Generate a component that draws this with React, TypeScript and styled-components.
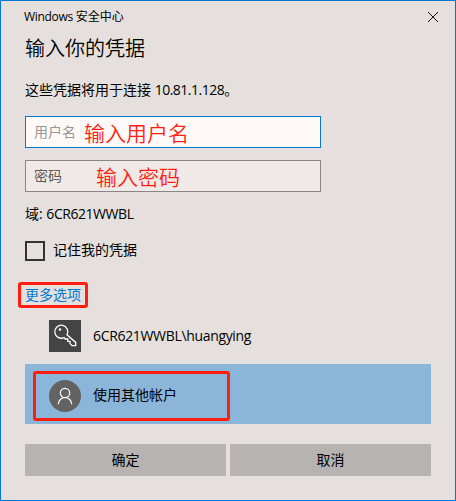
import React from "react";
import styled, { createGlobalStyle } from "styled-components";

const GlobalStyle = createGlobalStyle`
  * { box-sizing: border-box; }
  body { margin: 0; }
`;

const Dialog = styled.main`
  display: flex;
  flex-direction: column;
  width: 456px;
  height: 501px;
  padding: 0 24px;
  border: 1px solid #0078d4;
  background: #e5e0dd;
  color: #000;
  font: 14px/20px "Open Sans", "Noto Sans CJK SC", sans-serif;
  white-space: nowrap;
`;

const TitleBar = styled.header`
  display: flex;
  justify-content: space-between;
  height: 31px;
  padding-top: 6px;
  margin: 0 -8px 0 -1px;
  font-size: 12px;
`;

const CloseButton = styled.button`
  width: 12px;
  height: 12px;
  margin-top: 4px;
  padding: 0;
  border: 0;
  background: none;

  svg { display: block; }
`;

const Latin = styled.span<{ $spacing: number }>`
  letter-spacing: ${({ $spacing }) => $spacing}px;
`;

const Heading = styled.h1`
  height: 32px;
  margin: 0;
  font-family: "Noto Sans CJK SC DemiLight", "Noto Sans CJK SC", sans-serif;
  font-size: 20px;
  font-weight: 350;
  line-height: 32px;
`;

const Message = styled.p`
  height: 20px;
  margin: 16px 0;
`;

const Field = styled.div<{ $active?: boolean }>`
  display: flex;
  align-items: center;
  width: 296px;
  height: 32px;
  margin-bottom: 12px;
  padding-left: 8px;
  border: 1px solid ${({ $active }) => ($active ? "#0078d4" : "#8a8683")};
  background: ${({ $active }) => ($active ? "#fffaf7" : "#efeae7")};
  color: ${({ $active }) => ($active ? "#999693" : "#5e5c5a")};
`;

const Note = styled.span<{ $gap: number }>`
  margin-left: ${({ $gap }) => $gap}px;
  color: #ff1e0f;
  font-family: "Noto Sans CJK SC DemiLight", "Noto Sans CJK SC", sans-serif;
  font-size: 21px;
  font-weight: 350;
  line-height: 30px;
`;

const Domain = styled.p`
  height: 20px;
  margin: 0 0 17px;
`;

const Remember = styled.label`
  display: flex;
  align-items: center;
  gap: 8px;
  height: 20px;
`;

const Label = styled.span`
  padding-bottom: 2px;
`;

const CheckBox = styled.span`
  width: 20px;
  height: 20px;
  border: 2px solid #333;
`;

const MoreOptions = styled.a`
  display: flex;
  align-items: center;
  justify-content: center;
  width: 70px;
  height: 26px;
  margin: 21px 0 0 -7px;
  border: 3px solid #ff1e0f;
  border-radius: 3px;
  color: #0078d4;
`;

const Account = styled.div<{ $selected?: boolean }>`
  display: flex;
  align-items: ${({ $selected }) => ($selected ? "stretch" : "center")};
  height: ${({ $selected }) => ($selected ? 60 : 56)}px;
  padding: ${({ $selected }) => ($selected ? "7px 8px 3px" : "0 24px")};
  background: ${({ $selected }) => ($selected ? "#8cb5da" : "transparent")};
  gap: 12px;
`;

const Highlight = styled.div`
  display: flex;
  align-items: center;
  gap: 12px;
  width: 197px;
  padding: 0 0 1px 13px;
  border: 3px solid #ff1e0f;
  border-radius: 3px;
`;

const Tile = styled.span<{ $round?: boolean }>`
  display: block;
  width: 32px;
  height: 32px;
  border-radius: ${({ $round }) => ($round ? "50%" : "0")};
  background: ${({ $round }) => ($round ? "#636363" : "#444")};

  svg { display: block; }
`;

const Actions = styled.footer`
  display: grid;
  grid-template-columns: 1fr 1fr;
  gap: 4px;
  margin-top: 20px;
`;

const Action = styled.button`
  height: 32px;
  padding: 0;
  border: 0;
  background: #b7b3b1;
  color: #000;
  font: inherit;
`;

export default function App() {
  return (
    <>
      <GlobalStyle />
      <Dialog>
        <TitleBar>
          <span><Latin $spacing={-0.3}>Windows </Latin>安全中心</span>
          <CloseButton aria-label="关闭">
            <svg width="12" height="12" fill="none" stroke="#111">
              <path d="M1 1 11 11M11 1 1 11" />
            </svg>
          </CloseButton>
        </TitleBar>
        <Heading>输入你的凭据</Heading>
        <Message>这些凭据将用于连接 <Latin $spacing={-0.5}>10.81.1.128</Latin>。</Message>
        <Field $active>用户名<Note $gap={8}>输入用户名</Note></Field>
        <Field>密码<Note $gap={34}>输入密码</Note></Field>
        <Domain>域: <Latin $spacing={-0.45}>6CR621WWBL</Latin></Domain>
        <Remember><CheckBox /><Label>记住我的凭据</Label></Remember>
        <MoreOptions>更多选项</MoreOptions>
        <Account>
          <Tile>
            <svg width="32" height="32" fill="none" stroke="#fff" strokeWidth="1.3">
              <circle cx="11" cy="9.5" r="1.2" fill="#fff" stroke="none" />
              <path d="M18 14.8A6.5 6.5 0 1 0 15 17.6l1.2 1.4h2.6v2.4h2.2v2.2l2 2h3.7v-3.2Z" />
            </svg>
          </Tile>
          <Latin $spacing={-0.33}>6CR621WWBL\huangying</Latin>
        </Account>
        <Account $selected>
          <Highlight>
            <Tile $round>
              <svg width="32" height="32" fill="none" stroke="#fff" strokeWidth="1.2">
                <circle cx="16" cy="13" r="4.7" />
                <path d="M9.3 24.2a6.7 6.7 0 0 1 13.4 0" />
              </svg>
            </Tile>
            <Label>使用其他帐户</Label>
          </Highlight>
        </Account>
        <Actions>
          <Action>确定</Action>
          <Action>取消</Action>
        </Actions>
      </Dialog>
    </>
  );
}
